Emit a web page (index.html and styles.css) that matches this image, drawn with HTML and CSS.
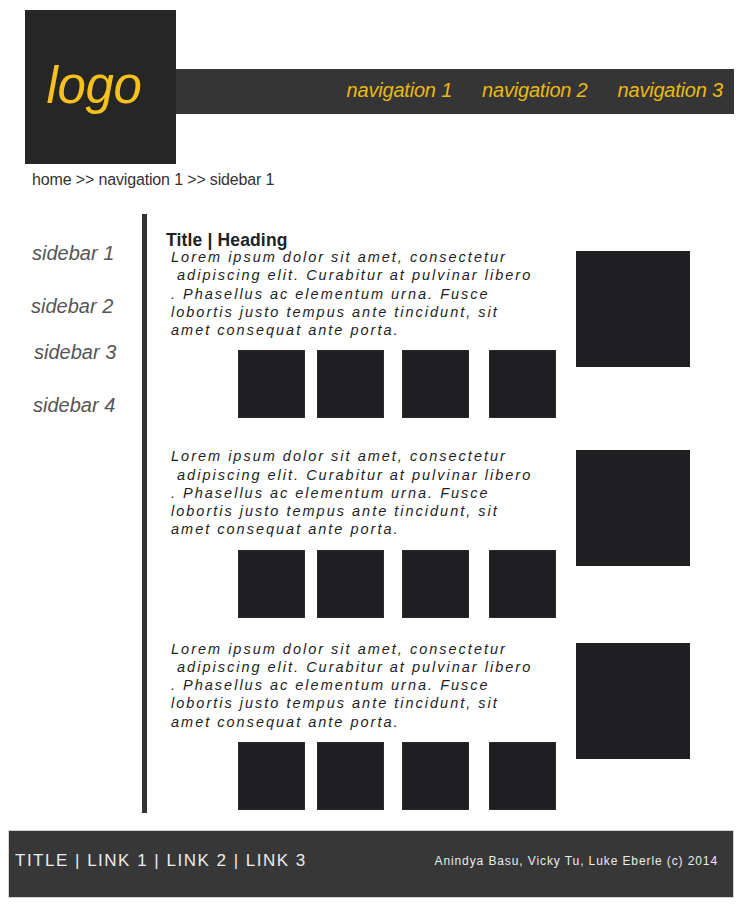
FILE: index.html
```html
<!DOCTYPE html>
<html lang="en">
<head>
<meta charset="utf-8">
<title>Layout</title>
<link rel="stylesheet" href="styles.css">
</head>
<body>
<header class="header">
  <div class="logo">logo</div>
  <nav class="nav">
    <a class="nav-item">navigation 1</a>
    <a class="nav-item">navigation 2</a>
    <a class="nav-item">navigation 3</a>
  </nav>
</header>
<div class="crumbs">home &gt;&gt; navigation 1 &gt;&gt; sidebar 1</div>
<div class="main">
  <aside class="sidebar">
    <ul class="side-list">
      <li class="side-item">sidebar 1</li>
      <li class="side-item">sidebar 2</li>
      <li class="side-item">sidebar 3</li>
      <li class="side-item">sidebar 4</li>
    </ul>
  </aside>
  <div class="content">
    <h1 class="heading">Title | Heading</h1>
    <div class="section">
      <div class="section-left">
        <p class="text">Lorem ipsum dolor sit amet, consectetur<br>&nbsp;adipiscing elit. Curabitur at pulvinar libero<br>. Phasellus ac elementum urna. Fusce<br>lobortis justo tempus ante tincidunt, sit<br>amet consequat ante porta.</p>
        <div class="thumbs">
          <div class="thumb"></div><div class="thumb"></div><div class="thumb"></div><div class="thumb"></div>
        </div>
      </div>
      <div class="big"></div>
    </div>
    <div class="section">
      <div class="section-left">
        <p class="text">Lorem ipsum dolor sit amet, consectetur<br>&nbsp;adipiscing elit. Curabitur at pulvinar libero<br>. Phasellus ac elementum urna. Fusce<br>lobortis justo tempus ante tincidunt, sit<br>amet consequat ante porta.</p>
        <div class="thumbs">
          <div class="thumb"></div><div class="thumb"></div><div class="thumb"></div><div class="thumb"></div>
        </div>
      </div>
      <div class="big"></div>
    </div>
    <div class="section">
      <div class="section-left">
        <p class="text">Lorem ipsum dolor sit amet, consectetur<br>&nbsp;adipiscing elit. Curabitur at pulvinar libero<br>. Phasellus ac elementum urna. Fusce<br>lobortis justo tempus ante tincidunt, sit<br>amet consequat ante porta.</p>
        <div class="thumbs">
          <div class="thumb"></div><div class="thumb"></div><div class="thumb"></div><div class="thumb"></div>
        </div>
      </div>
      <div class="big"></div>
    </div>
  </div>
</div>
<footer class="footer">
  <div class="footer-links">TITLE | LINK 1 | LINK 2 | LINK 3</div>
  <div class="footer-credit">Anindya Basu, Vicky Tu, Luke Eberle (c) 2014</div>
</footer>
</body>
</html>
```
FILE: styles.css
```css
html, body {
  margin: 0;
  padding: 0;
  background: #ffffff;
}
body {
  width: 742px;
  font-family: "Liberation Sans", Arial, sans-serif;
}
.header {
  display: flex;
  align-items: flex-start;
  padding: 10px 0 0 25px;
}
.logo {
  width: 151px;
  height: 154px;
  background: #262626;
  color: #f6c11c;
  font-family: "Liberation Sans", Arial, sans-serif;
  font-style: italic;
  font-size: 51px;
  letter-spacing: -0.3px;
  display: flex;
  align-items: center;
  justify-content: center;
  padding-right: 13px;
  padding-bottom: 4px;
  box-sizing: border-box;
}
.nav {
  margin-top: 59px;
  width: 558px;
  height: 45px;
  background: #353535;
  display: flex;
  align-items: center;
  justify-content: flex-end;
  gap: 30px;
  padding-right: 11px;
  padding-bottom: 3px;
  box-sizing: border-box;
}
.nav-item {
  color: #eab914;
  font-family: "Liberation Sans", Arial, sans-serif;
  font-style: italic;
  font-size: 20px;
  letter-spacing: -0.2px;
}
.crumbs {
  margin-top: 6px;
  padding-left: 32px;
  line-height: 20px;
  font-family: "Liberation Sans", Arial, sans-serif;
  font-size: 16px;
  letter-spacing: -0.15px;
  color: #333333;
}
.main {
  display: flex;
  margin-top: 24px;
}
.sidebar {
  width: 142px;
  flex: none;
}
.side-list {
  list-style: none;
  margin: 0;
  padding: 27px 0 0 32px;
}
.side-item {
  font-family: "Liberation Sans", Arial, sans-serif;
  font-style: italic;
  font-size: 20px;
  line-height: 24px;
  color: #555555;
}
.side-item:nth-child(2) { margin-top: 29px; margin-left: -1px; }
.side-item:nth-child(3) { margin-top: 22px; margin-left: 2px; }
.side-item:nth-child(4) { margin-top: 29px; margin-left: 1px; }
.content {
  border-left: 5px solid #333333;
  padding: 18px 0 3px 19px;
  flex: none;
  width: 560px;
}
.heading {
  margin: 0;
  font-family: "Liberation Sans", Arial, sans-serif;
  font-weight: bold;
  font-size: 17.5px;
  line-height: 16px;
  color: #222222;
  letter-spacing: 0.15px;
}
.section {
  display: flex;
  margin-left: 5px;
}
.section:nth-of-type(2) { margin-top: 29px; }
.section:nth-of-type(3) { margin-top: 22px; }
.section-left {
  width: 405px;
  flex: none;
}
.text {
  margin: 0;
  font-family: "Liberation Sans", Arial, sans-serif;
  font-style: italic;
  font-size: 14.5px;
  line-height: 18.25px;
  letter-spacing: 2px;
  color: #1e1e1e;
  white-space: nowrap;
}
.thumbs {
  display: flex;
  margin: 11px 0 0 67px;
}
.thumb {
  width: 67px;
  height: 68px;
  background: #1f1f21;
  box-shadow: inset 0 0 0 1px #2b2b2c;
  flex: none;
}
.thumb:nth-child(2) { margin-left: 12px; }
.thumb:nth-child(3) { margin-left: 18px; }
.thumb:nth-child(4) { margin-left: 20px; }
.big {
  width: 114px;
  height: 116px;
  margin-top: 3px;
  background: #1f1f21;
  flex: none;
}
.footer {
  margin: 17px 0 0 8px;
  width: 726px;
  height: 68px;
  box-sizing: border-box;
  border: 1px solid #d4d4d4;
  background: #373737;
  display: flex;
  align-items: center;
  justify-content: space-between;
  padding: 0 15px 6px 6px;
  color: #ececec;
}
.footer-links {
  font-size: 17px;
  letter-spacing: 1.5px;
}
.footer-credit {
  font-size: 12px;
  letter-spacing: 0.9px;
}
```
